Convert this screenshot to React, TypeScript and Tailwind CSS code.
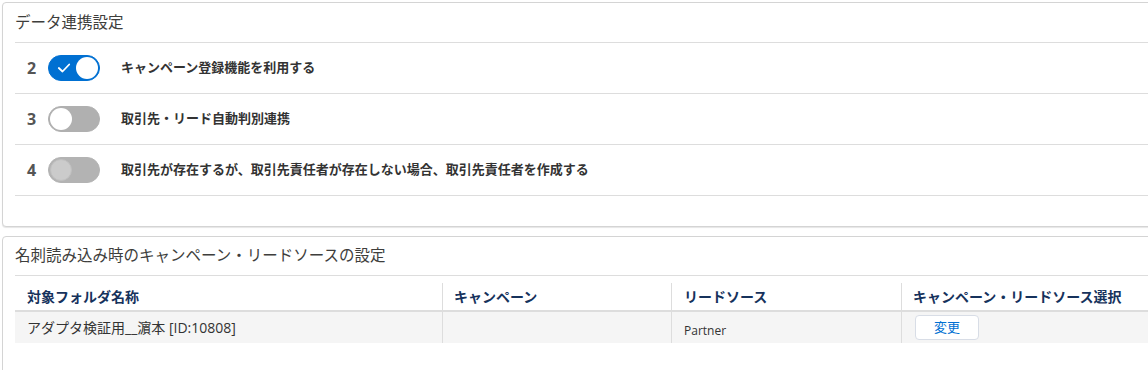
import React from "react";

const font = { fontFamily: '"Open Sans", "Noto Sans CJK JP", sans-serif' };

function Toggle({ state }: { state: "on" | "off" | "disabled" }) {
  if (state === "on") {
    return (
      <div className="relative h-[26px] w-[52px] rounded-full bg-[#0070d2] border border-[#0070d2]">
        <svg className="absolute left-[8px] top-[6px]" width="14" height="12" viewBox="0 0 14 12">
          <path d="M1.8 6 L5.5 9.5 L12.2 2.5" stroke="white" strokeWidth="1.8" fill="none" strokeLinecap="round" strokeLinejoin="round" />
        </svg>
        <div className="absolute right-[1px] top-[1px] h-[22px] w-[22px] rounded-full bg-white" />
      </div>
    );
  }
  if (state === "off") {
    return (
      <div className="relative h-[26px] w-[52px] rounded-full bg-[#b0b0b0] border border-[#b0b0b0]">
        <div className="absolute left-[1px] top-[1px] h-[22px] w-[22px] rounded-full bg-white" />
      </div>
    );
  }
  return (
    <div className="relative h-[26px] w-[52px] rounded-full bg-[#b3b3b3] border border-[#b3b3b3]">
      <div className="absolute left-[1px] top-[1px] h-[22px] w-[22px] rounded-full bg-[#cbcbcb] border border-[#c0c0c0]" />
    </div>
  );
}

function SettingRow({ n, state, label }: { n: string; state: "on" | "off" | "disabled"; label: string }) {
  return (
    <div className="flex h-[51px] items-center border-b border-[#dddddd]">
      <span className="w-[33px] pl-[12px] text-[16px] font-bold text-[#555555]">{n}</span>
      <Toggle state={state} />
      <span className="ml-[21px] text-[13px] font-bold text-[#333333]">{label}</span>
    </div>
  );
}

export default function App() {
  return (
    <div className="w-[1148px] h-[370px] overflow-hidden bg-white" style={font}>
      <div className="pt-[2px] pl-[2px]">
        <div className="w-[1170px] rounded-[4px] border border-[#d4d4d4] bg-white shadow-[0_1px_1px_rgba(0,0,0,0.1)]">
          <div className="ml-[12px] h-[40px] flex items-center border-b border-[#dddddd] text-[15.5px] text-[#3e3e3c]">
            データ連携設定
          </div>
          <div className="ml-[12px]">
            <SettingRow n="2" state="on" label="キャンペーン登録機能を利用する" />
            <SettingRow n="3" state="off" label="取引先・リード自動判別連携" />
            <SettingRow n="4" state="disabled" label="取引先が存在するが、取引先責任者が存在しない場合、取引先責任者を作成する" />
          </div>
          <div className="h-[30px]" />
        </div>

        <div className="mt-[9px] w-[1170px] h-[160px] rounded-[4px] border border-[#d4d4d4] bg-white">
          <div className="ml-[12px] h-[39px] flex items-center border-b border-[#dddddd] text-[15.5px] text-[#3e3e3c]">
            名刺読み込み時のキャンペーン・リードソースの設定
          </div>
          <div className="ml-[12px] mt-[7px]">
            <div className="flex h-[29px] items-center border-b-2 border-[#dddddd] text-[14px] font-bold text-[#16325c]">
              <div className="w-[427px] pl-[12px] h-full flex items-center">対象フォルダ名称</div>
              <div className="w-[229px] pl-[11px] h-full flex items-center border-l border-[#dddddd]">キャンペーン</div>
              <div className="w-[230px] pl-[12px] h-full flex items-center border-l border-[#dddddd]">リードソース</div>
              <div className="flex-1 pl-[11px] h-full flex items-center border-l border-[#dddddd]">キャンペーン・リードソース選択</div>
            </div>
            <div className="flex h-[31px] bg-[#f5f5f5] text-[#333333]">
              <div className="w-[427px] pl-[12px] flex items-center text-[14px]">アダプタ検証用__濵本 [ID:10808]</div>
              <div className="w-[229px] border-l border-[#dddddd]" />
              <div className="w-[230px] pl-[12px] pt-[6px] flex items-center text-[12px] border-l border-[#dddddd]">Partner</div>
              <div className="flex-1 pl-[13px] pt-[2px] border-l border-[#dddddd]">
                <button className="h-[25px] w-[64px] rounded-[4px] border border-[#d8dde6] bg-white text-[13px] text-[#0070d2]">
                  変更
                </button>
              </div>
            </div>
          </div>
        </div>
      </div>
    </div>
  );
}
